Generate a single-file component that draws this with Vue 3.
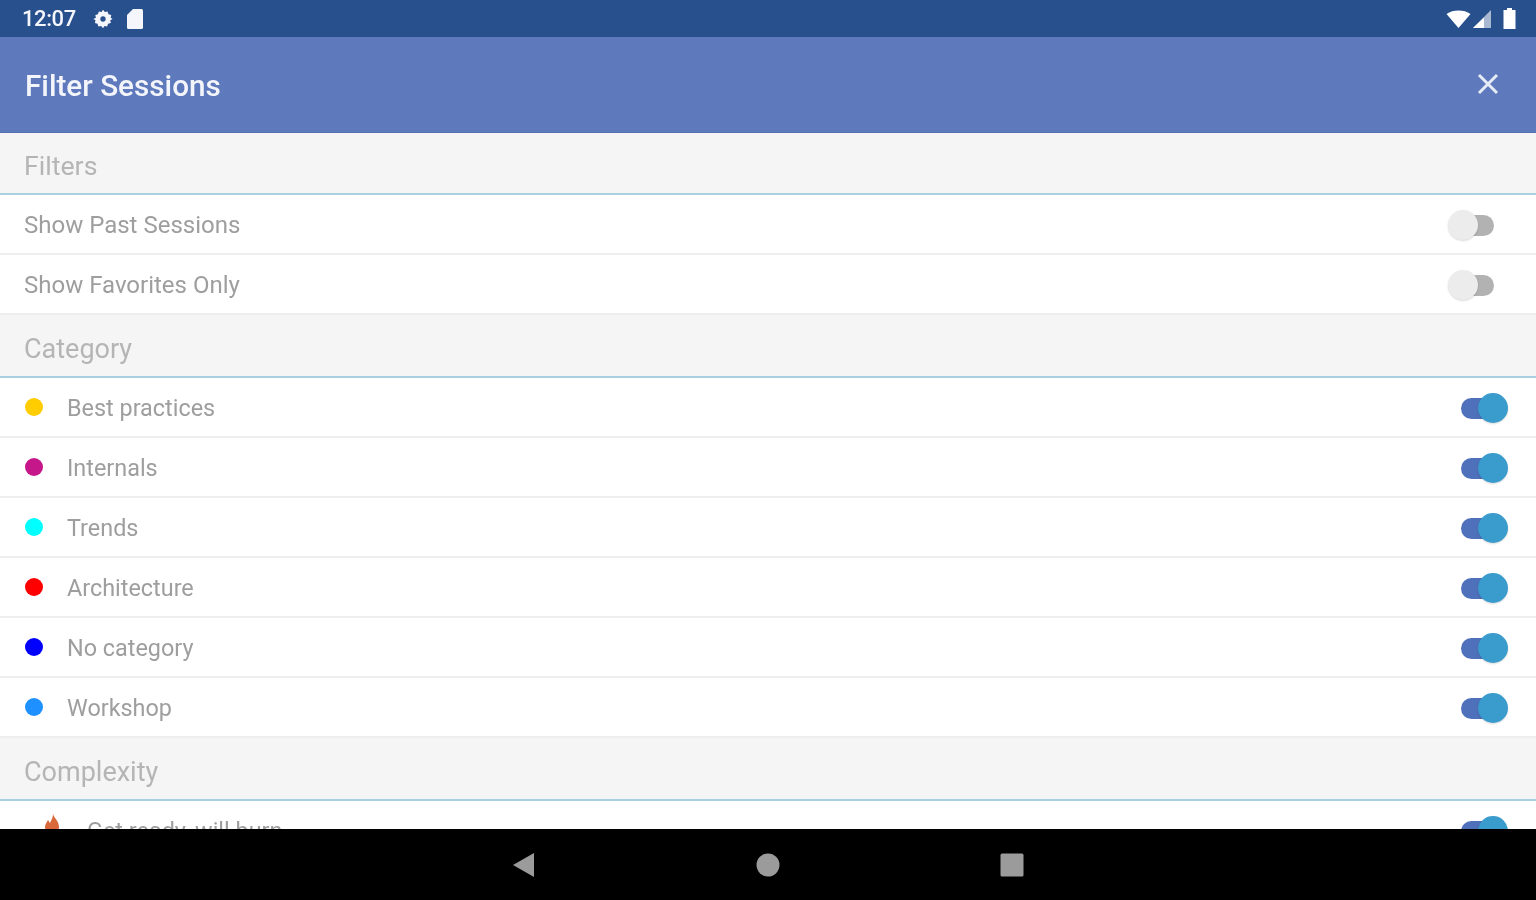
<template>
  <div class="screen">
    <div class="status-bar">
      <div class="status-left">
        <span class="clock">12:07</span>
        <svg class="gear" width="20" height="20" viewBox="0 0 24 24">
          <path fill="#f4f6fb" fill-rule="evenodd" d="M12 1l2.200 2.600 3.300-.7 1.100 3.300 3.300 1.100-.7 3.300L23.500 12l-2.800 1.400.7 3.300-3.300 1.100-1.100 3.300-3.300-.7L12 23l-2.200-2.600-3.300.7-1.100-3.300-3.100-1.100.7-3.300L.5 12l3-1.400-.7-3.300 3.100-1.100 1.100-3.300 3.300.7zM12 8.800a3.200 3.200 0 100 6.400 3.200 3.200 0 000-6.400z" />
        </svg>
        <svg class="sd" width="18" height="20" viewBox="0 0 18 20">
          <path fill="#f4f6fb" d="M7 0h8.500A1.500 1.500 0 0117 1.500v17a1.500 1.500 0 01-1.500 1.500h-13A1.500 1.500 0 011 18.500V6z" />
        </svg>
      </div>
      <div class="status-right">
        <svg width="25" height="20" viewBox="0 0 25 20">
          <path fill="#fff" d="M.5 5C4 2.500 8 1.500 12.500 1.500S21 2.500 24.500 5L12.500 19z" />
        </svg>
        <svg width="20" height="20" viewBox="0 0 20 20">
          <path fill="#fff" opacity="0.6" d="M19 1v18H1z" />
          <path fill="#fff" d="M12 8.500V19H1z" />
        </svg>
        <svg class="battery" width="15" height="22" viewBox="0 0 15 22">
          <path fill="#fff" d="M5 0h5v2h3.500v19h-12V2H5z" />
        </svg>
      </div>
    </div>

    <header class="app-bar">
      <h1>Filter Sessions</h1>
      <svg class="close" width="24" height="24" viewBox="0 0 24 24">
        <path stroke="#e6ebf6" stroke-width="3" d="M3 2l18 18M21 2L3 20" />
      </svg>
    </header>

    <main class="content">
      <section v-for="group in groups" :key="group.title">
        <div class="group-title" :class="{ first: group.title === 'Filters' }"><span>{{ group.title }}</span></div>
        <div v-for="row in group.rows" :key="row.label" class="row" :class="{ plain: !row.color && !row.flame }">
          <span v-if="row.color" class="dot" :style="{ background: row.color }"></span>
          <span v-if="row.flame" class="flame">
            <svg width="20" height="24" viewBox="0 0 20 24">
              <path fill="#d9683a" d="M11 1c1 4 6 7 6 13a7 7 0 01-14 0c0-3 2-5 3-7 1 1 1 2 2 3 1-3 3-5 3-9z" />
            </svg>
          </span>
          <span class="label">{{ row.label }}</span>
          <span class="switch" :class="{ on: row.on }"><i></i></span>
        </div>
      </section>
    </main>

    <nav class="nav-bar">
      <svg width="24" height="26" viewBox="0 0 24 26"><path fill="#9b9b9b" d="M22 1v24L1 13z" /></svg>
      <svg width="24" height="24" viewBox="0 0 24 24"><circle cx="12" cy="12" r="11.500" fill="#9b9b9b" /></svg>
      <svg width="24" height="24" viewBox="0 0 24 24"><rect x="0.500" y="0.500" width="23" height="23" rx="1.500" fill="#9b9b9b" /></svg>
    </nav>
  </div>
</template>

<script setup>
const groups = [
  {
    title: 'Filters',
    rows: [
      { label: 'Show Past Sessions', on: false },
      { label: 'Show Favorites Only', on: false }
    ]
  },
  {
    title: 'Category',
    rows: [
      { label: 'Best practices', color: '#ffcc00', on: true },
      { label: 'Internals', color: '#c6178a', on: true },
      { label: 'Trends', color: '#00ffff', on: true },
      { label: 'Architecture', color: '#ff0000', on: true },
      { label: 'No category', color: '#0000ff', on: true },
      { label: 'Workshop', color: '#1e90ff', on: true }
    ]
  },
  {
    title: 'Complexity',
    rows: [{ label: 'Get ready, will burn', flame: true, on: true }]
  }
]
</script>

<style>
html,
body {
  margin: 0;
  overflow: hidden;
  background: #000;
}
</style>

<style scoped>
.screen {
  width: 1536px;
  height: 900px;
  display: flex;
  flex-direction: column;
  font-family: Roboto, "Liberation Sans", sans-serif;
  background: #fff;
  overflow: hidden;
  filter: blur(0.6px);
}

.status-bar {
  height: 37px;
  flex: none;
  display: flex;
  align-items: center;
  justify-content: space-between;
  padding: 0 19px 0 22px;
  background: #27508d;
  color: #f4f6fb;
}

.status-left,
.status-right {
  display: flex;
  align-items: center;
}

.clock {
  width: 71px;
  font-size: 22px;
  font-weight: 500;
  letter-spacing: -0.4px;
}

.sd {
  margin-left: 13px;
}

.status-right {
  gap: 1px;
}

.battery {
  margin-left: 9px;
}

.app-bar {
  height: 96px;
  flex: none;
  box-sizing: border-box;
  display: flex;
  align-items: center;
  justify-content: space-between;
  padding: 0 36px 0 25px;
  background: #5e7abc;
  border-bottom: 1px solid #5470b0;
}

.app-bar h1 {
  margin: 2px 0 0;
  font-size: 29.7px;
  font-weight: 500;
  color: #f3f5fb;
}

.close {
  margin-top: 1px;
}

.content {
  flex: 1;
  min-height: 0;
  overflow: hidden;
}

.group-title {
  height: 63px;
  box-sizing: border-box;
  display: flex;
  align-items: center;
  padding: 7px 0 0 24px;
  font-size: 27px;
  color: #b5b5b5;
  background: #f5f5f5;
  border-bottom: 2px solid #a9cfe3;
}

.group-title.first {
  height: 62px;
  padding-top: 5px;
  font-size: 26.7px;
}

.row {
  height: 60px;
  box-sizing: border-box;
  display: flex;
  align-items: center;
  padding: 0 29px 0 25px;
  border-bottom: 2px solid #eeeeee;
  background: #fff;
}

.dot {
  width: 18px;
  height: 18px;
  border-radius: 50%;
  margin-right: 24px;
}

.flame {
  display: flex;
  width: 62px;
  padding: 0 0 10px 17px;
  box-sizing: border-box;
}

.label {
  flex: 1;
  padding-top: 2px;
  font-size: 23.4px;
  color: #9e9e9e;
}

.row.plain .label {
  margin-left: -1px;
  font-size: 24px;
}

.switch {
  position: relative;
  top: 1px;
  width: 46px;
  height: 21px;
  border-radius: 11px;
  background: #b2b2b2;
}

.switch i {
  position: absolute;
  top: -5px;
  left: -1px;
  width: 30px;
  height: 30px;
  border-radius: 50%;
  background: #ececec;
  box-shadow: 0 1px 2px rgba(0, 0, 0, 0.15);
}

.switch:not(.on) {
  left: -13px;
  width: 45px;
}

.switch.on {
  background: #4f70ba;
}

.switch.on i {
  left: auto;
  right: -1px;
  background: #3a9bcd;
}

.nav-bar {
  height: 71px;
  flex: none;
  display: flex;
  align-items: center;
  justify-content: center;
  gap: 220px;
  background: #000;
}
</style>
